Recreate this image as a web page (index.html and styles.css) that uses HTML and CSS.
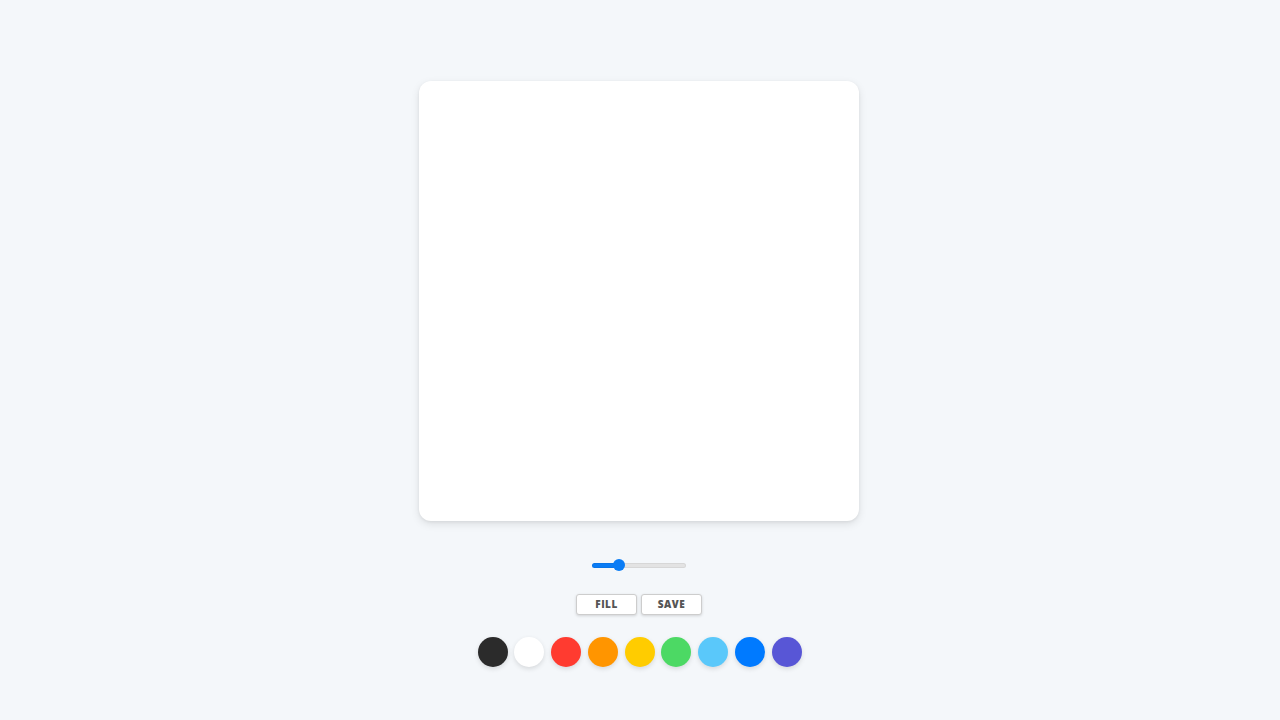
FILE: index.html
```html
<!DOCTYPE html>
<html lang="en">
<head>
<meta charset="utf-8">
<title>Paint</title>
<link rel="stylesheet" href="styles.css">
</head>
<body>
<main class="app">
  <canvas class="board" width="440" height="440"></canvas>
  <div class="range-row">
    <input class="range" type="range" min="0" max="100" value="26" style="--pct: 29%">
  </div>
  <div class="buttons">
    <button class="btn">Fill</button>
    <button class="btn">Save</button>
  </div>
  <div class="colors">
    <span class="swatch c-black"></span>
    <span class="swatch c-white"></span>
    <span class="swatch c-red"></span>
    <span class="swatch c-orange"></span>
    <span class="swatch c-yellow"></span>
    <span class="swatch c-green"></span>
    <span class="swatch c-sky"></span>
    <span class="swatch c-blue"></span>
    <span class="swatch c-purple"></span>
  </div>
</main>
</body>
</html>
```
FILE: styles.css
```css
* { box-sizing: border-box; }
html, body { margin: 0; padding: 0; }
body {
  background: #f4f7fa;
  font-family: "Open Sans", "Liberation Sans", sans-serif;
  width: 1280px;
  height: 720px;
  overflow: hidden;
}
.app {
  display: flex;
  flex-direction: column;
  align-items: center;
  padding-top: 81px;
  padding-right: 2px;
}
.board {
  display: block;
  width: 440px;
  height: 440px;
  background: #fff;
  border-radius: 12px;
  box-shadow: 0 3px 8px rgba(0,0,0,0.10), 0 1px 3px rgba(0,0,0,0.06);
}
.range-row {
  margin-top: 37px;
  height: 14px;
  display: flex;
  align-items: center;
}
.range {
  -webkit-appearance: none;
  appearance: none;
  width: 94px;
  height: 5px;
  margin: 0;
  border-radius: 3px;
  background: linear-gradient(to right, #0a7cf5 0, #0a7cf5 var(--pct), #e3e3e3 var(--pct), #e3e3e3 100%);
  box-shadow: inset 0 0 0 1px rgba(0,0,0,0.05);
  outline: none;
}
.range::-webkit-slider-thumb {
  -webkit-appearance: none;
  appearance: none;
  width: 12px;
  height: 12px;
  border-radius: 50%;
  background: #0a7cf5;
  border: none;
}
.buttons {
  margin-top: 22px;
  display: flex;
  gap: 4px;
}
.btn {
  width: 61px;
  height: 21px;
  padding: 0;
  background: #fff;
  border: 1px solid #cdcdcd;
  border-radius: 3px;
  box-shadow: 0 1px 3px rgba(0,0,0,0.15);
  font-family: "Open Sans", "Liberation Sans", sans-serif;
  font-weight: 800;
  font-size: 10px;
  letter-spacing: 0.5px;
  text-transform: uppercase;
  color: #555;
  line-height: 19px;
}
.colors {
  margin-top: 22px;
  display: flex;
  gap: 6.75px;
  margin-left: 1px;
}
.swatch {
  display: block;
  width: 30px;
  height: 30px;
  border-radius: 50%;
  box-shadow: 0 2px 5px rgba(0,0,0,0.12);
}
.c-black { background: #2b2b2b; }
.c-white { background: #ffffff; }
.c-red { background: #ff3b30; }
.c-orange { background: #ff9500; }
.c-yellow { background: #ffcc00; }
.c-green { background: #4cd964; }
.c-sky { background: #5ac8fa; }
.c-blue { background: #007aff; }
.c-purple { background: #5856d6; }
```
